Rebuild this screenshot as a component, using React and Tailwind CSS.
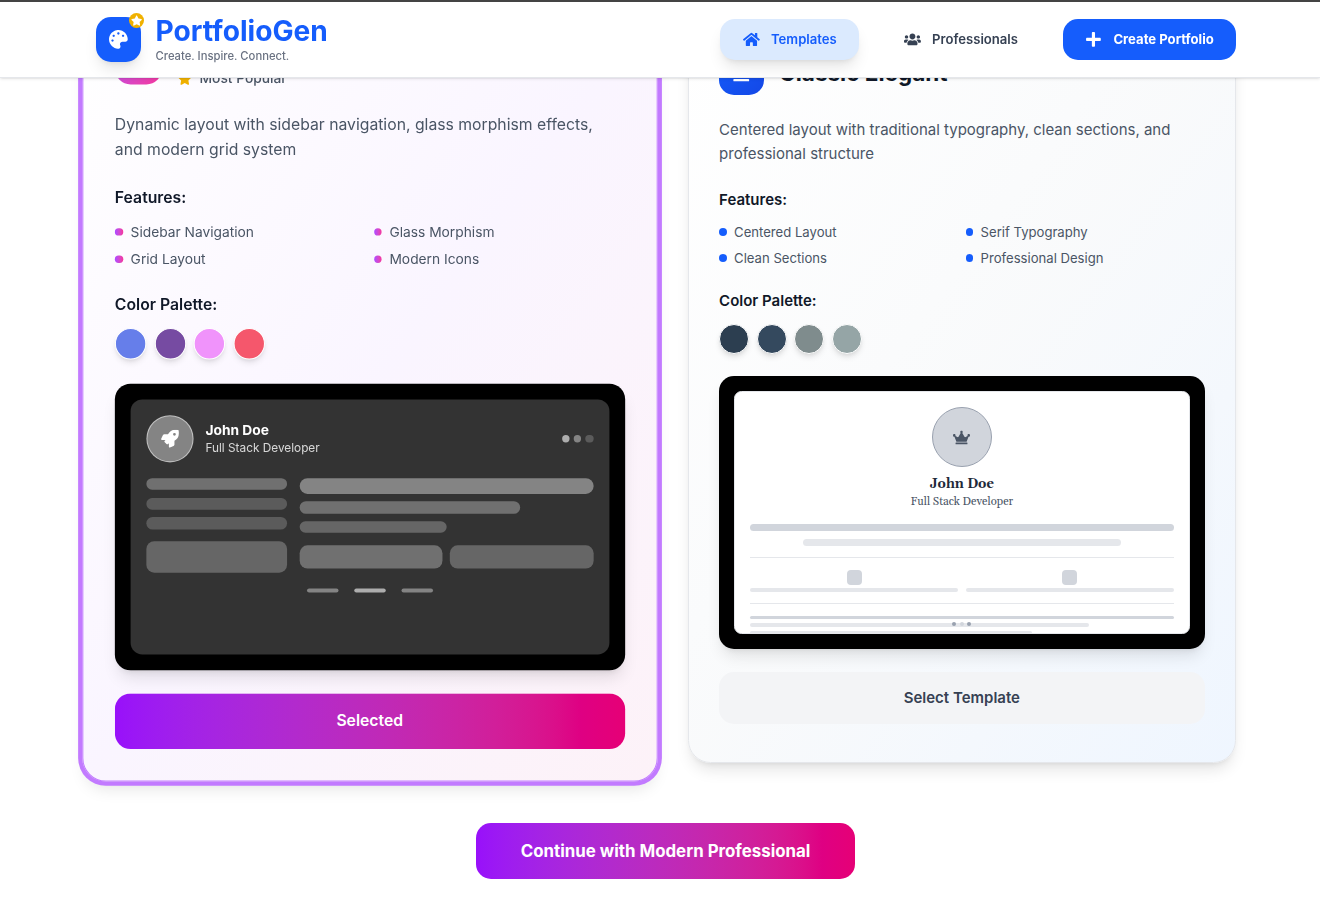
import React from "react";
import {
  FaPalette,
  FaStar,
  FaHome,
  FaUsers,
  FaPlus,
  FaRocket,
  FaCrown,
} from "react-icons/fa";

// Compact scale: one rem step is worth 15px instead of 16px.
const SCALE =
  "[--spacing:3.75px] [--text-xs:11.25px] [--text-sm:13.125px] [--text-base:15px] [--text-lg:16.875px] [--text-2xl:22.5px] [--text-3xl:28.125px] [--radius-lg:7.5px] [--radius-xl:11.25px] [--radius-2xl:15px] [--radius-3xl:22.5px]";

function Header() {
  return (
    <header className="fixed inset-x-0 top-0 z-10 border-t-2 border-b border-t-[#444444] border-b-gray-200 bg-white shadow-sm">
      <div className="ml-[96px] flex h-[75px] w-[1140.25px] items-center justify-between">
        <div className="flex items-center gap-[14.5px]">
          <div className="relative flex size-12 items-center justify-center rounded-2xl bg-blue-600 text-white shadow-lg">
            <FaPalette className="size-5" />
            <span className="absolute -top-1 -right-[3px] flex size-4 items-center justify-center rounded-full bg-yellow-500">
              <FaStar className="size-3" />
            </span>
          </div>
          <div>
            <h1 className="text-3xl leading-[33.75px] font-bold text-blue-600">PortfolioGen</h1>
            <p className="text-xs leading-[15px] font-medium text-gray-500">
              Create. Inspire. Connect.
            </p>
          </div>
        </div>
        <nav className="flex items-center gap-[22.25px] text-sm">
          <a className="flex items-center gap-3 rounded-2xl bg-blue-100 px-6 py-3 font-semibold text-blue-600 shadow-lg">
            <FaHome className="size-[16.875px]" />
            Templates
          </a>
          <a className="flex items-center gap-3 rounded-2xl px-6 py-3 font-semibold text-gray-700">
            <FaUsers className="size-[16.875px]" />
            Professionals
          </a>
          <a className="flex items-center gap-3 rounded-2xl bg-blue-600 px-6 py-3 font-bold text-white">
            <FaPlus className="size-[16.875px]" />
            Create Portfolio
          </a>
        </nav>
      </div>
    </header>
  );
}

function Details({ description, features, dotClass, palette }) {
  return (
    <>
      <p className="mt-6 text-base leading-[24.375px] text-gray-600">{description}</p>
      <h4 className="mt-6 text-base leading-[22.5px] font-semibold text-gray-900">Features:</h4>
      <ul className="mt-3 grid grid-cols-2 gap-2">
        {features.map((f) => (
          <li key={f} className="flex items-center gap-2 text-sm text-gray-600">
            <span className={`size-2 rounded-full ${dotClass}`} />
            {f}
          </li>
        ))}
      </ul>
      <h4 className="mt-6 text-base leading-[22.5px] font-semibold text-gray-900">
        Color Palette:
      </h4>
      <div className="mt-3 flex gap-2">
        {palette.map((c) => (
          <span key={c} className={`size-8 rounded-full border border-white shadow-md ${c}`} />
        ))}
      </div>
    </>
  );
}

function ModernPreview() {
  return (
    <div className="mt-6 aspect-video overflow-hidden rounded-2xl bg-black p-4 shadow-lg">
      <div className="h-full rounded-xl bg-[#333333] p-4">
        <div className="flex items-center gap-3">
          <div className="flex size-12 items-center justify-center rounded-full border border-white/50 bg-white/40 text-white">
            <FaRocket className="size-[17px]" />
          </div>
          <div>
            <div className="text-sm font-bold text-white">John Doe</div>
            <div className="text-xs leading-[15px] text-white/80">Full Stack Developer</div>
          </div>
          <div className="ml-auto flex gap-1">
            <span className="size-2 rounded-full bg-white/60" />
            <span className="size-2 rounded-full bg-white/40" />
            <span className="size-2 rounded-full bg-white/20" />
          </div>
        </div>
        <div className="mt-4 grid grid-cols-3 gap-3">
          <div>
            <div className="h-3 rounded-lg bg-white/30" />
            <div className="mt-2 h-3 rounded-lg bg-white/20" />
            <div className="mt-2 h-3 rounded-lg bg-white/20" />
            <div className="mt-3 h-8 rounded-lg bg-white/25" />
          </div>
          <div className="col-span-2">
            <div className="h-4 rounded-lg bg-white/40" />
            <div className="mt-2 h-3 w-3/4 rounded-lg bg-white/30" />
            <div className="mt-2 h-3 w-1/2 rounded-lg bg-white/25" />
            <div className="mt-3 grid grid-cols-2 gap-2">
              <div className="h-6 rounded-lg bg-white/30" />
              <div className="h-6 rounded-lg bg-white/25" />
            </div>
          </div>
        </div>
        <div className="mt-4 flex justify-center gap-4">
          <span className="h-1 w-8 rounded-full bg-white/40" />
          <span className="h-1 w-8 rounded-full bg-white/60" />
          <span className="h-1 w-8 rounded-full bg-white/40" />
        </div>
      </div>
    </div>
  );
}

function ClassicPreview() {
  return (
    <div className="mt-6 aspect-video overflow-hidden rounded-2xl bg-black p-4 shadow-lg">
      <div className="relative h-full overflow-hidden rounded-lg border border-gray-200 bg-white p-4">
        <div className="flex flex-col items-center font-[Gelasio,'Noto_Serif',serif]">
          <div className="flex size-16 items-center justify-center rounded-full border border-gray-400 bg-gray-300 text-gray-600">
            <FaCrown className="size-[17px]" />
          </div>
          <div className="mt-2 text-sm font-bold text-gray-800">John Doe</div>
          <div className="pt-px text-xs leading-[14px] text-gray-600">Full Stack Developer</div>
        </div>
        <div className="mt-4 h-2 rounded-full bg-gray-300" />
        <div className="mx-auto mt-2 h-2 w-3/4 rounded-full bg-gray-200" />
        <div className="mt-3 grid grid-cols-2 gap-x-2 border-t border-gray-200 pt-3">
          <div className="flex flex-col gap-1">
            <div className="mx-auto size-4 rounded-[4px] bg-gray-300" />
            <div className="h-1 rounded-full bg-gray-200" />
          </div>
          <div className="flex flex-col gap-1">
            <div className="mx-auto size-4 rounded-[4px] bg-gray-300" />
            <div className="h-1 rounded-full bg-gray-200" />
          </div>
        </div>
        <div className="mt-3 flex flex-col gap-1 border-t border-gray-200 pt-3">
          <div className="h-1 rounded-full bg-gray-300" />
          <div className="h-1 w-4/5 rounded-full bg-gray-200" />
          <div className="h-1 w-2/3 rounded-full bg-gray-200" />
        </div>
        <div className="absolute inset-x-0 bottom-2 flex justify-center gap-1">
          <span className="size-1 rounded-full bg-gray-400" />
          <span className="size-1 rounded-full bg-gray-300" />
          <span className="size-1 rounded-full bg-gray-400" />
        </div>
      </div>
    </div>
  );
}

export default function App() {
  return (
    <div
      className={`h-[901px] overflow-hidden bg-white font-[Inter,sans-serif] ${SCALE}`}
    >
      <Header />
      <main className="ml-[95.6px] w-[1140px] pt-[19px]">
        <div className="grid grid-cols-2 gap-12">
          <article className="scale-105 rounded-3xl border border-purple-400 bg-gradient-to-br from-white via-purple-50 to-pink-50 p-8 shadow-lg ring-4 ring-purple-400">
            <div className="flex items-center gap-4">
              <div className="flex size-12 items-center justify-center rounded-2xl bg-gradient-to-br from-purple-500 to-pink-500" />
              <div className="mt-9 flex items-center gap-2 text-sm font-medium text-gray-600">
                <FaStar className="size-[13.125px] text-yellow-500" />
                Most Popular
              </div>
            </div>
            <Details
              description="Dynamic layout with sidebar navigation, glass morphism effects, and modern grid system"
              features={["Sidebar Navigation", "Glass Morphism", "Grid Layout", "Modern Icons"]}
              dotClass="bg-gradient-to-r from-purple-500 to-pink-500"
              palette={["bg-[#667eea]", "bg-[#764ba2]", "bg-[#f093fb]", "bg-[#f5576c]"]}
            />
            <ModernPreview />
            <button className="mt-6 w-full rounded-2xl bg-gradient-to-r from-purple-600 to-pink-600 py-4 text-base leading-[22.5px] font-semibold text-white">
              Selected
            </button>
          </article>

          <article className="rounded-3xl border border-gray-200 bg-gradient-to-br from-white via-gray-50 to-blue-50 p-8 shadow-lg">
            <div className="flex items-center gap-4">
              <div className="flex size-12 items-center justify-center rounded-2xl bg-gradient-to-br from-blue-600 to-blue-700 text-white">
                <FaCrown className="size-[22.5px]" />
              </div>
              <h3 className="text-2xl leading-[30px] font-bold text-gray-900">Classic Elegant</h3>
            </div>
            <Details
              description="Centered layout with traditional typography, clean sections, and professional structure"
              features={[
                "Centered Layout",
                "Serif Typography",
                "Clean Sections",
                "Professional Design",
              ]}
              dotClass="bg-blue-600"
              palette={["bg-[#2c3e50]", "bg-[#34495e]", "bg-[#7f8c8d]", "bg-[#95a5a6]"]}
            />
            <ClassicPreview />
            <button className="mt-6 w-full rounded-2xl bg-gray-100 py-4 text-base leading-[22.5px] font-semibold text-gray-700">
              Select Template
            </button>
          </article>
        </div>
        <div className="mt-16 flex justify-center">
          <button className="rounded-2xl bg-gradient-to-r from-purple-600 to-pink-600 px-12 py-4 text-lg leading-[26.25px] font-bold text-white">
            Continue with Modern Professional
          </button>
        </div>
      </main>
    </div>
  );
}
